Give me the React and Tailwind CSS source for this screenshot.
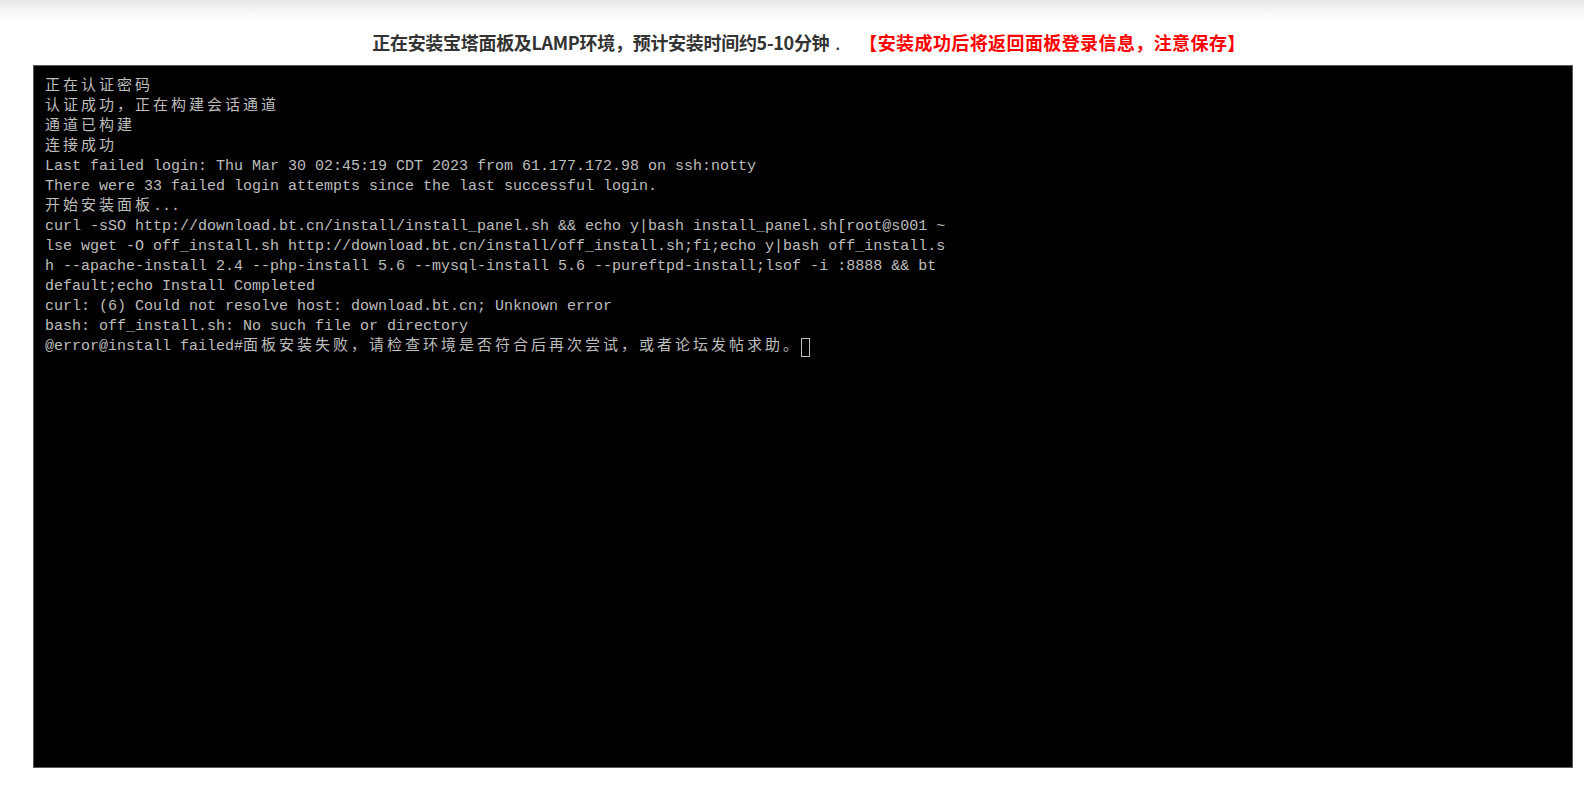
import React from "react";

const cjk = "font-['Liberation_Mono','Noto_Sans_CJK_SC',monospace] tracking-[3px]";

function Line({ children }) {
    return <div className="h-[20px] leading-[20px] whitespace-pre">{children}</div>;
}

export default function App() {
    const lines = [
        { zh: "正在认证密码" },
        { zh: "认证成功，正在构建会话通道" },
        { zh: "通道已构建" },
        { zh: "连接成功" },
        { en: "Last failed login: Thu Mar 30 02:45:19 CDT 2023 from 61.177.172.98 on ssh:notty" },
        { en: "There were 33 failed login attempts since the last successful login." },
        { zh: "开始安装面板", en: "..." },
        { en: "curl -sSO http://download.bt.cn/install/install_panel.sh && echo y|bash install_panel.sh[root@s001 ~" },
        { en: "lse wget -O off_install.sh http://download.bt.cn/install/off_install.sh;fi;echo y|bash off_install.s" },
        { en: "h --apache-install 2.4 --php-install 5.6 --mysql-install 5.6 --pureftpd-install;lsof -i :8888 && bt" },
        { en: "default;echo Install Completed" },
        { en: "curl: (6) Could not resolve host: download.bt.cn; Unknown error" },
        { en: "bash: off_install.sh: No such file or directory" },
    ];

    return (
        <div className="min-h-[785px] bg-white font-['Liberation_Mono',monospace]">
            {/* top shadow strip */}
            <div className="h-[22px] bg-gradient-to-b from-[#e6e6e6] via-[#f6f6f6] to-white" />

            <div className="ml-[33px] w-[1540px]">
                <div className="h-[43px] flex items-start justify-center pt-[8px] pl-[12px] font-['Noto_Sans_CJK_SC',sans-serif] font-bold text-[18px] leading-[24px] text-[#333]">
                    <span className="tracking-[-0.3px]">正在安装宝塔面板及LAMP环境，预计安装时间约5-10分钟</span>
                    <span className="font-normal ml-[6px] mr-[19px]">.</span>
                    <span className="text-[#f00] tracking-[0.4px]">【安装成功后将返回面板登录信息，注意保存】</span>
                </div>

                <div className="h-[703px] bg-black border border-[#5a5a5a] pt-[11px] pl-[11px] text-[15px] text-[#bdbdbd]">
                    {lines.map((l, i) => (
                        <Line key={i}>
                            {l.zh && <span className={cjk}>{l.zh}</span>}
                            {l.en && <span>{l.en}</span>}
                        </Line>
                    ))}
                    <Line>
                        <span>@error@install failed#</span>
                        <span className={cjk}>面板安装失败，请检查环境是否符合后再次尝试，或者论坛发帖求助。</span>
                        <span className="inline-block align-top mt-[1px] w-[9px] h-[19px] border border-[#bdbdbd]" />
                    </Line>
                </div>
            </div>
        </div>
    );
}
